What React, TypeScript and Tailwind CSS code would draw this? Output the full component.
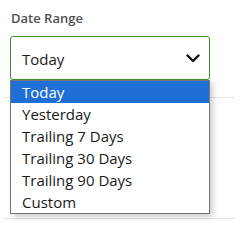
const options = ["Today", "Yesterday", "Trailing 7 Days", "Trailing 30 Days", "Trailing 90 Days", "Custom"];

export default function App() {
  return (
    <div className="w-[240px] h-[240px] bg-white overflow-hidden font-['Open_Sans',sans-serif]">
      <div className="px-[10px] pt-[8px]">
        <label className="block pl-[1px] text-[13px] leading-[20px] font-semibold text-[#505050]">Date Range</label>
        <div className="relative mt-[8px] w-[200px]">
          <div className="flex h-[44px] items-center justify-between rounded-[3px] border border-[#3f8f2f] bg-white pl-[11px] pr-[8px] pt-[3px]">
            <span className="text-[15px] text-[#1a1a1a]">Today</span>
            <svg width="14" height="9" viewBox="0 0 14 9" className="mr-[1px] -mt-[3px]">
              <path d="M1.5 1.5 L7 7 L12.5 1.5" fill="none" stroke="#111" strokeWidth="2.4" strokeLinecap="round" strokeLinejoin="round" />
            </svg>
          </div>
          <ul className="absolute left-0 top-full z-10 w-[200px] border border-[#767676] bg-white shadow-[3px_3px_6px_rgba(0,0,0,0.2)]">
            {options.map((o, i) => (
              <li
                key={o}
                className={`h-[22px] pl-[11px] text-[15px] leading-[22px] ${i === 0 ? "bg-[#1f6fd6] text-white" : "text-[#1a1a1a]"}`}
              >
                {o}
              </li>
            ))}
          </ul>
        </div>
      </div>
      <div className="mx-[4px] mt-[17px] h-px w-[231px] bg-[#e5e5e5]" />
      <div className="h-[120px]" />
      <div className="mx-[4px] h-px w-[231px] bg-[#e5e5e5]" />
    </div>
  );
}
